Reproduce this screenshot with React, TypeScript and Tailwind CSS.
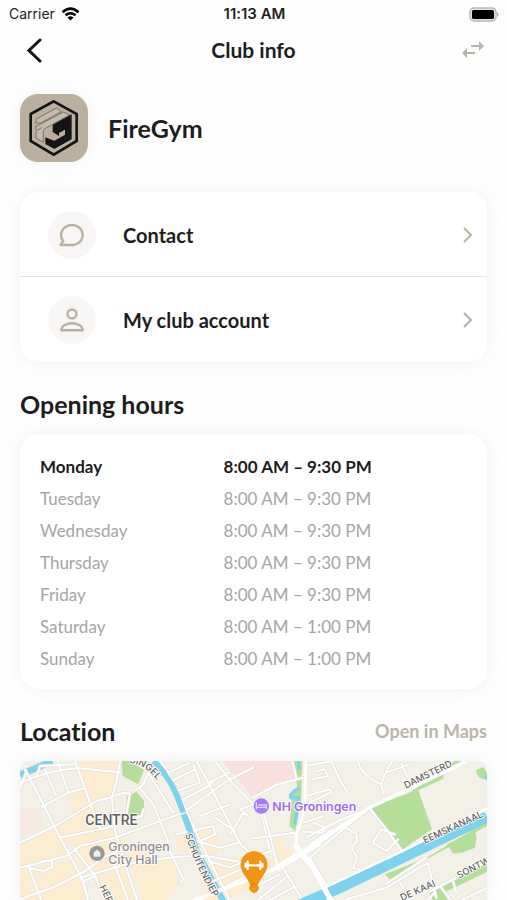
import React from 'react';

const hours = [
  ['Monday', '8:00 AM – 9:30 PM'],
  ['Tuesday', '8:00 AM – 9:30 PM'],
  ['Wednesday', '8:00 AM – 9:30 PM'],
  ['Thursday', '8:00 AM – 9:30 PM'],
  ['Friday', '8:00 AM – 9:30 PM'],
  ['Saturday', '8:00 AM – 1:00 PM'],
  ['Sunday', '8:00 AM – 1:00 PM'],
];

// Streets west of the centre canal
const westStreets = [
  'M60 262L78 215M60 245Q155 205 235 202L360 214',
  'M75 205L135 320L175 400L245 530L265 600',
  'M225 180L275 320L300 380M335 285L345 390L385 520L412 600',
  'M135 205L168 283M172 180L205 275M125 318L205 275L250 262M110 225L120 195L225 190',
  'M60 425L165 375L290 300L330 290',
  'M360 180L350 240L335 290',
  'M330 290Q370 270 390 278L378 345M405 268L430 250L445 215',
  'M60 500L200 465L240 435L345 410L550 335L680 240L760 200',
  'M180 410L345 375',
  'M85 500L130 510L158 497L155 480L125 480M85 495L125 600',
  'M60 595L170 555L255 510L310 470L400 430',
  'M240 530L380 490Q520 462 620 465L760 490',
  'M265 600L250 540L285 525L310 590',
  'M340 480L385 600M220 440L290 530',
  'M420 262L460 310L500 410L512 460',
  'M430 325L425 345L405 352M445 215L520 335M480 180L500 205L560 330L600 420L690 600',
  'M505 215L570 185M515 240L585 205M530 270L600 245L580 190M550 295L625 255L640 240',
  'M590 180L625 245L690 370L722 430L765 470M625 245L690 215',
  'M600 345L690 310M645 350L705 390M645 180L700 250L785 335L810 450L835 480',
  'M530 400L640 375L645 400L600 420M515 460L550 535L540 545',
  'M690 400L730 335L745 345L720 325L760 310M590 420L660 440L715 425',
  'M625 480L690 500L760 470M640 540L760 490M650 570L760 515',
];

// Streets east of the centre canal
const eastStreets = [
  'M0 290L70 252L150 230M118 180L130 230M30 330L50 400L75 500M0 412L125 395M0 470L55 450',
  'M158 195L240 180M235 180L262 240L285 275',
  'M315 180Q325 225 385 250L392 280M385 250L400 210L418 180M445 188L462 225M400 215L470 190',
  'M180 235L225 225L215 205L190 210M160 285L230 265L235 275L170 305',
  'M155 330L220 300M152 365L210 345M150 392L210 395L215 380L180 365',
  'M160 410L255 360L350 322M170 470L275 380L350 322M170 470L235 575',
  'M275 380L310 398L312 420L295 440L312 468L300 500L340 512M170 430L240 385',
  'M350 322L400 385L450 455M435 415L400 450L360 425L385 385L425 400',
  'M90 500L150 600M0 560L80 520M10 600L105 525M45 600L120 560',
  'M280 595L400 560L525 485L550 590M400 548L520 470M440 545L460 570M600 540L610 575',
  'M530 572L705 480M565 560L595 600M620 600L705 560M520 600L545 575',
];

function Streets({ paths }: { paths: string[] }) {
  return (
    <g fill="none" strokeLinejoin="round" strokeLinecap="round">
      <path d={paths.join('')} stroke="#e2dfda" strokeWidth="10" />
      <path d={paths.join('')} stroke="#fff" strokeWidth="6" />
    </g>
  );
}

function StatusBar() {
  return (
    <div className="grid h-7 shrink-0 grid-cols-3 items-center pl-[9px] pr-[7px] font-['Inter',sans-serif] text-sm text-[#222]">
      <div className="flex items-center gap-[6px]">
        <span>Carrier</span>
        <svg width="19" height="14" viewBox="0 0 18 14" fill="none" stroke="#000" strokeWidth="2.6" aria-hidden="true">
          <path d="M1 5.2Q9-2 17 5.2M4 8.3Q9 4 14 8.3" />
          <path d="M9 13.5L6 10.5Q9 8 12 10.5Z" fill="#000" stroke="none" />
        </svg>
      </div>
      <span className="text-center text-[15px] font-semibold">11:13 AM</span>
      <svg className="justify-self-end" width="31" height="15" viewBox="0 0 31 15" aria-hidden="true">
        <rect x="1" y="1" width="26" height="13" rx="4" fill="#e4e4e4" stroke="#b8b8b8" strokeWidth="1.5" />
        <rect x="3" y="3" width="22" height="9" rx="1.5" fill="#000" />
        <path d="M28 5Q31 7.5 28 10Z" fill="#aaa" />
      </svg>
    </div>
  );
}

function GymLogo() {
  return (
    <svg className="h-[68px] w-[68px] rounded-[18px] bg-[#bbb0a0] shadow-[0_0_20px_rgba(0,0,0,0.06)]" viewBox="17 17 204 204" role="img" aria-label="FireGym logo">
      <path d="M118 39L187 77V158L118 199L49 158V77Z" fill="none" stroke="#151514" strokeWidth="8" />
      <g fill="#c4baab" stroke="#5a5449" strokeWidth="2">
        <path d="M66 92L128 58L141 70L79 104L64 104Z" />
        <path d="M64 124L64 115L148 71L166 80L94 119L87 127V162L65 149V128L84 117" />
      </g>
      <path d="M172 78V153L120 182L93 167V147L120 157L152 139V124L134 134V143L115 131V109Z" fill="#151514" />
    </svg>
  );
}

function ChatIcon() {
  return (
    <svg width="28" height="24" viewBox="0 0 26 24" fill="none" stroke="#b9b19f" strokeWidth="2.4" strokeLinejoin="round" aria-hidden="true">
      <path d="M1.500 22L4.200 18A10.800 10 0 1 1 14 22Z" />
    </svg>
  );
}

function PersonIcon() {
  return (
    <svg width="24" height="24" viewBox="0 0 24 24" fill="none" stroke="#b9b19f" strokeWidth="2.4" aria-hidden="true">
      <circle cx="12" cy="6" r="4.5" />
      <path d="M1.500 22.200V21C2 18 6 15.300 12 15.300S22 18 22.500 21V22.200Z" />
    </svg>
  );
}

function MenuRow({ label, children }: { label: string; children: React.ReactNode }) {
  return (
    <button className="flex h-[85px] w-full items-center pl-7 pr-[14px] text-left">
      <span className="mr-[27px] flex size-12 items-center justify-center rounded-full bg-[#f8f6f4]">{children}</span>
      <span className="flex-1 text-xl font-bold">{label}</span>
      <svg width="10" height="18" viewBox="0 0 10 18" fill="none" stroke="#b9b3a3" strokeWidth="2" aria-hidden="true">
        <path d="M1 2L8 9L1 16" />
      </svg>
    </button>
  );
}

function ClubMap() {
  return (
    <svg
      className="block h-full w-full font-['Inter',sans-serif]"
      viewBox="60 180 1401 420"
      preserveAspectRatio="xMidYMin slice"
      role="img"
      aria-label="Map of the club location in Groningen"
    >
      <rect x="60" y="180" width="1401" height="1400" fill="#f3f0e8" />
      <g fill="#fcecd0">
        <path d="M228 180H360L350 240L335 290L290 300L300 380L215 400L175 400L160 380L225 350L200 280L250 262L225 200Z" />
        <path d="M60 430L165 375L180 410L200 465L60 500Z" />
        <path d="M60 505L145 490L215 480L245 530L265 600H60Z" />
        <path d="M180 410L345 375L360 410L410 430L480 480L380 490L412 600H310L285 525L240 500L220 440Z" />
        <path d="M390 490L510 465L540 545L500 600H425Z" />
        <path d="M525 410L640 378L660 420L650 460L560 462L530 440Z" />
        <path d="M660 480L760 460L830 480L790 540L680 600H620L600 500Z" />
        <path d="M824 415L850 405L860 440L882 445L870 475L835 485Z" />
      </g>
      <path d="M60 325L120 320L130 380L60 410Z" fill="#f5e9e2" />
      <path d="M668 180H877L888 232L829 245L760 292Z" fill="#f9dfde" />
      <g fill="#b5df99">
        <path d="M365 180H390L432 207L415 250L368 225Z" />
        <path d="M380 285L410 272L432 300V330L423 347L405 335L380 345Z" />
        <path d="M1110 317L1255 267L1296 385L1208 445Z" />
        <path d="M880 180H907L903 300L886 390L868 375L876 300L865 280L893 265Z" />
        <path d="M1215 285L1365 180H1392L1330 218V233L1262 265Z" />
        <path d="M1427 208L1450 198L1463 220L1448 235L1435 228Z" />
        <path d="M1340 430L1425 390L1430 410L1425 440L1385 455L1360 458Z" />
        <path d="M1155 520L1280 470L1461 360V375L1280 475L1170 536Z" />
        <path d="M1285 570L1461 485V513L1330 575L1345 600H1300Z" />
      </g>
      <g fill="none" stroke="#7dd3ee">
        <path d="M60 222L157 180" strokeWidth="20" />
        <path d="M460 180Q510 215 550 335L590 450L670 600" strokeWidth="18" />
        <path d="M895 180L897 205M900 260Q869 275 872 290H895L885 370" strokeWidth="10" />
      </g>
      <path d="M1447 230L1461 223V238Z" fill="#7dd3ee" />
      <Streets paths={westStreets} />
      <path d="M478 205Q520 240 550 335M555 345L590 445" fill="none" stroke="#7dd3ee" strokeWidth="16" />
      <g transform="translate(759 0)">
        <Streets paths={eastStreets} />
        <path d="M140 612L260 560L702 348" fill="none" stroke="#7dd3ee" strokeWidth="33" />
        <path d="M215 560L450 450L702 322" fill="none" stroke="#fff" strokeWidth="7" />
        <path d="M158 180L155 330L130 400V450" fill="none" stroke="#fff" strokeWidth="9" />
        <path d="M125 430L180 500L235 600" fill="none" stroke="#fff" strokeWidth="16" />
        <path d="M-180 600L0 530L80 498L180 435L345 322L460 268L640 180" fill="none" stroke="#fff" strokeWidth="11" />
        <path d="M70 502L200 424" fill="none" stroke="#fff" strokeWidth="18" />
      </g>

      <g fill="#606060" stroke="#fff" strokeWidth="5" strokeLinejoin="round" paintOrder="stroke">
        <text x="256" y="372" className="font-['Roboto',sans-serif]" fontSize="42" fontWeight="500">CENTRE</text>
        <path id="singel" d="M388 186Q445 190 488 262" fill="none" stroke="none" />
        <path id="schuitendiep" d="M556 401Q580 490 670 640" fill="none" stroke="none" />
        <g fontSize="28" fontWeight="500">
          <text><textPath href="#singel">SINGEL</textPath></text>
          <text><textPath href="#schuitendiep">SCHUITENDIEP</textPath></text>
          <text transform="translate(298 558) rotate(64)">HER</text>
          <text transform="translate(1218 263) rotate(-26)">DAMSTERD</text>
          <text transform="translate(1275 428) rotate(-25)">EEMSKANAAL</text>
          <text transform="translate(1377 533) rotate(-27)">SONTW</text>
          <text transform="translate(1206 600) rotate(-24)">DE KAAI</text>
        </g>
        <g fontSize="37" fontWeight="500" fill="#8c8c8c">
          <text x="325" y="451">Groningen</text>
          <text x="325" y="489">City Hall</text>
        </g>
        <text x="817" y="329" fontSize="37" fontWeight="600" fill="#9b6bf0">NH Groningen</text>
      </g>

      <circle cx="291" cy="457" r="23" fill="#999" />
      <path d="M281 467V454L291 446L301 454V467Z" fill="#f1f1f1" />
      <circle cx="784" cy="315" r="23" fill="#a67cf3" />
      <path d="M769 304V325M769 319H799V325M775 312H799V318" fill="none" stroke="#e5d8fc" strokeWidth="4" />

      <path d="M762 452C785 452 801 469 801 491C801 515 778 532 772 553A13 13 0 1 1 752 553C746 532 723 515 723 491C723 469 739 452 762 452Z" fill="#f39413" stroke="#e5830a" strokeWidth="2" />
      <path d="M752 552Q762 544 772 552" fill="none" stroke="#d97706" strokeWidth="3" />
      <path d="M743 482V504M781 482V504M737 489V497M787 489V497M743 493H781" stroke="#fff" strokeWidth="7" strokeLinecap="round" />
    </svg>
  );
}

export default function App() {
  return (
    <div className="flex h-screen flex-col overflow-hidden bg-[#fefefe] font-['Lato',sans-serif] text-[#1d1d1d] [font-variant-ligatures:none]">
      <StatusBar />
      <header className="grid h-11 shrink-0 grid-cols-3 items-center px-5">
        <button aria-label="Back" className="justify-self-start pl-[7px]">
          <svg width="15" height="25" viewBox="0 0 15 25" fill="none" stroke="#151515" strokeWidth="3" aria-hidden="true">
            <path d="M13 2L2 12.5L13 23" strokeLinecap="round" />
          </svg>
        </button>
        <h1 className="text-center text-[21px] font-bold">Club info</h1>
        <button aria-label="Switch club" className="justify-self-end pr-[3px]">
          <svg width="22" height="18" viewBox="0 0 22 18" aria-hidden="true">
            <path d="M9 4H17V0L22 5L17 10V6H9Z" fill="#b9b4a5" />
            <path d="M13 11H5V7L0 12L5 17V13H13Z" fill="#b9b4a5" />
          </svg>
        </button>
      </header>
      <main className="flex min-h-0 flex-1 flex-col px-5">
        <section className="mt-[22px] flex items-center gap-5">
          <GymLogo />
          <h2 className="text-[25px] font-bold leading-8">FireGym</h2>
        </section>
        <section className="mt-[30px] rounded-[20px] bg-white shadow-[0_0_20px_rgba(0,0,0,0.06)]">
          <MenuRow label="Contact"><ChatIcon /></MenuRow>
          <hr className="-mt-px border-[#e3e3e3]" />
          <MenuRow label="My club account"><PersonIcon /></MenuRow>
        </section>
        <h2 className="mt-[26px] text-[25px] font-bold leading-8">Opening hours</h2>
        <section className="mt-[14px] rounded-[20px] bg-white px-5 pb-[14px] pt-[17px] shadow-[0_0_20px_rgba(0,0,0,0.06)]">
          <table className="w-full text-[17px]" aria-label="Opening hours">
            <tbody>
              {hours.map(([day, time], i) => (
                <tr key={day} className={i === 0 ? 'h-8 font-bold' : 'h-8 font-normal text-[#a5a5a5]'}>
                  <th scope="row" className="w-[43%] text-left [font-weight:inherit]">{day}</th>
                  <td>{time}</td>
                </tr>
              ))}
            </tbody>
          </table>
        </section>
        <div className="mt-[26px] flex items-center justify-between">
          <h2 className="text-[25px] font-bold leading-8">Location</h2>
          <a href="#map" className="text-lg font-bold text-[#bbb5a6]">Open in Maps</a>
        </div>
        <div id="map" className="mt-[14px] min-h-[139px] flex-1 overflow-hidden rounded-t-[8px] shadow-[0_0_20px_rgba(0,0,0,0.06)]">
          <ClubMap />
        </div>
      </main>
    </div>
  );
}
